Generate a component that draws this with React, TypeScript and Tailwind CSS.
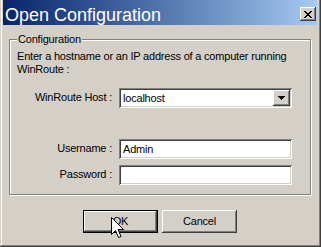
const raised =
  'shadow-[inset_-1px_-1px_0_#404040,inset_1px_1px_0_#ffffff,inset_-2px_-2px_0_#808080]'
const sunken =
  'shadow-[inset_1px_1px_0_#808080,inset_-1px_-1px_0_#ffffff,inset_2px_2px_0_#404040,inset_-2px_-2px_0_#d4d0c8]'

function CloseGlyph() {
  // classic 8x7 pixel X
  const rows = ['XX....XX', '.XX..XX.', '..XXXX..', '...XX...', '..XXXX..', '.XX..XX.', 'XX....XX']
  return (
    <svg width="8" height="7" viewBox="0 0 8 7" shapeRendering="crispEdges">
      {rows.flatMap((r, y) =>
        r.split('').map((c, x) => (c === 'X' ? <rect key={`${x}-${y}`} x={x} y={y} width="1" height="1" fill="#000" /> : null))
      )}
    </svg>
  )
}

function DownArrow() {
  return (
    <svg width="7" height="4" viewBox="0 0 7 4" shapeRendering="crispEdges">
      <rect x="0" y="0" width="7" height="1" fill="#000" />
      <rect x="1" y="1" width="5" height="1" fill="#000" />
      <rect x="2" y="2" width="3" height="1" fill="#000" />
      <rect x="3" y="3" width="1" height="1" fill="#000" />
    </svg>
  )
}

function Cursor() {
  return (
    <svg width="14" height="22" viewBox="0 0 14 22" className="absolute left-[27px] top-[6px] pointer-events-none">
      <path
        d="M0.5 0.5 V17.5 L4.5 13.5 L7.5 20.5 L10 19.5 L7 12.5 H12.5 Z"
        fill="#fff"
        stroke="#000"
        strokeWidth="1"
        strokeLinejoin="miter"
      />
    </svg>
  )
}

function Field({ value, combo }: { value: string; combo?: boolean }) {
  return (
    <div className={`w-[173px] h-[20px] bg-white p-[2px] flex ${sunken}`}>
      <div className="flex-1 pl-[2px] leading-[16px] text-black">{value}</div>
      {combo && (
        <div className={`w-[17px] h-[16px] bg-[#d4d0c8] flex items-center justify-center ${raised}`}>
          <DownArrow />
        </div>
      )}
    </div>
  )
}

function Row({ label, children, className = '' }: { label: string; children: React.ReactNode; className?: string }) {
  return (
    <div className={`flex items-start gap-[7px] ${className}`}>
      <div className="w-[102px] text-right leading-[19px]">{label}</div>
      {children}
    </div>
  )
}

export default function App() {
  return (
    <div className="w-[321px] h-[247px] bg-[#d4d0c8] pl-[3px] pr-[4px] font-['Liberation_Sans',Arial,sans-serif] text-[11px] tracking-[-0.2px] text-black shadow-[inset_-1px_-1px_0_#404040,inset_1px_0_0_#d4d0c8,inset_-2px_-2px_0_#808080,inset_2px_0_0_#ffffff] flex flex-col">
      {/* Title bar */}
      <div className="h-[25px] flex items-start bg-gradient-to-r from-[#0a246a] to-[#a6caf0]">
        <div className="pl-[2px] pt-[5px] text-[18px] leading-[20px] tracking-normal text-white">Open Configuration</div>
        <div className={`ml-auto mr-[1px] mt-[7px] w-[16px] h-[14px] bg-[#d4d0c8] flex items-center justify-center ${raised}`}>
          <CloseGlyph />
        </div>
      </div>

      {/* Body */}
      <div className="pl-[6px] pt-[7px] flex flex-col">
        <fieldset className="w-[302px] border border-[#808080] shadow-[inset_1px_1px_0_#ffffff,1px_1px_0_#ffffff] pb-[9px]">
          <legend className="ml-[7px] px-[1px] leading-[14px] bg-[#d4d0c8]">Configuration</legend>
          <div className="pl-[7px] pt-[4px] leading-[13px]">
            Enter a hostname or an IP address of a computer running WinRoute :
          </div>
          <Row label="WinRoute Host :" className="mt-[12px]">
            <Field value="localhost" combo />
          </Row>
          <Row label="Username :" className="mt-[31px]">
            <Field value="Admin" />
          </Row>
          <Row label="Password :" className="mt-[6px]">
            <Field value="" />
          </Row>
        </fieldset>

        <div className="mt-[15px] flex justify-center gap-[4px] pr-[6px]">
          <div className="relative w-[75px] h-[23px] border border-black">
            <div className={`w-full h-full flex items-center justify-center ${raised}`}>OK</div>
            <Cursor />
          </div>
          <div className={`w-[75px] h-[23px] flex items-center justify-center ${raised}`}>Cancel</div>
        </div>
      </div>
    </div>
  )
}
